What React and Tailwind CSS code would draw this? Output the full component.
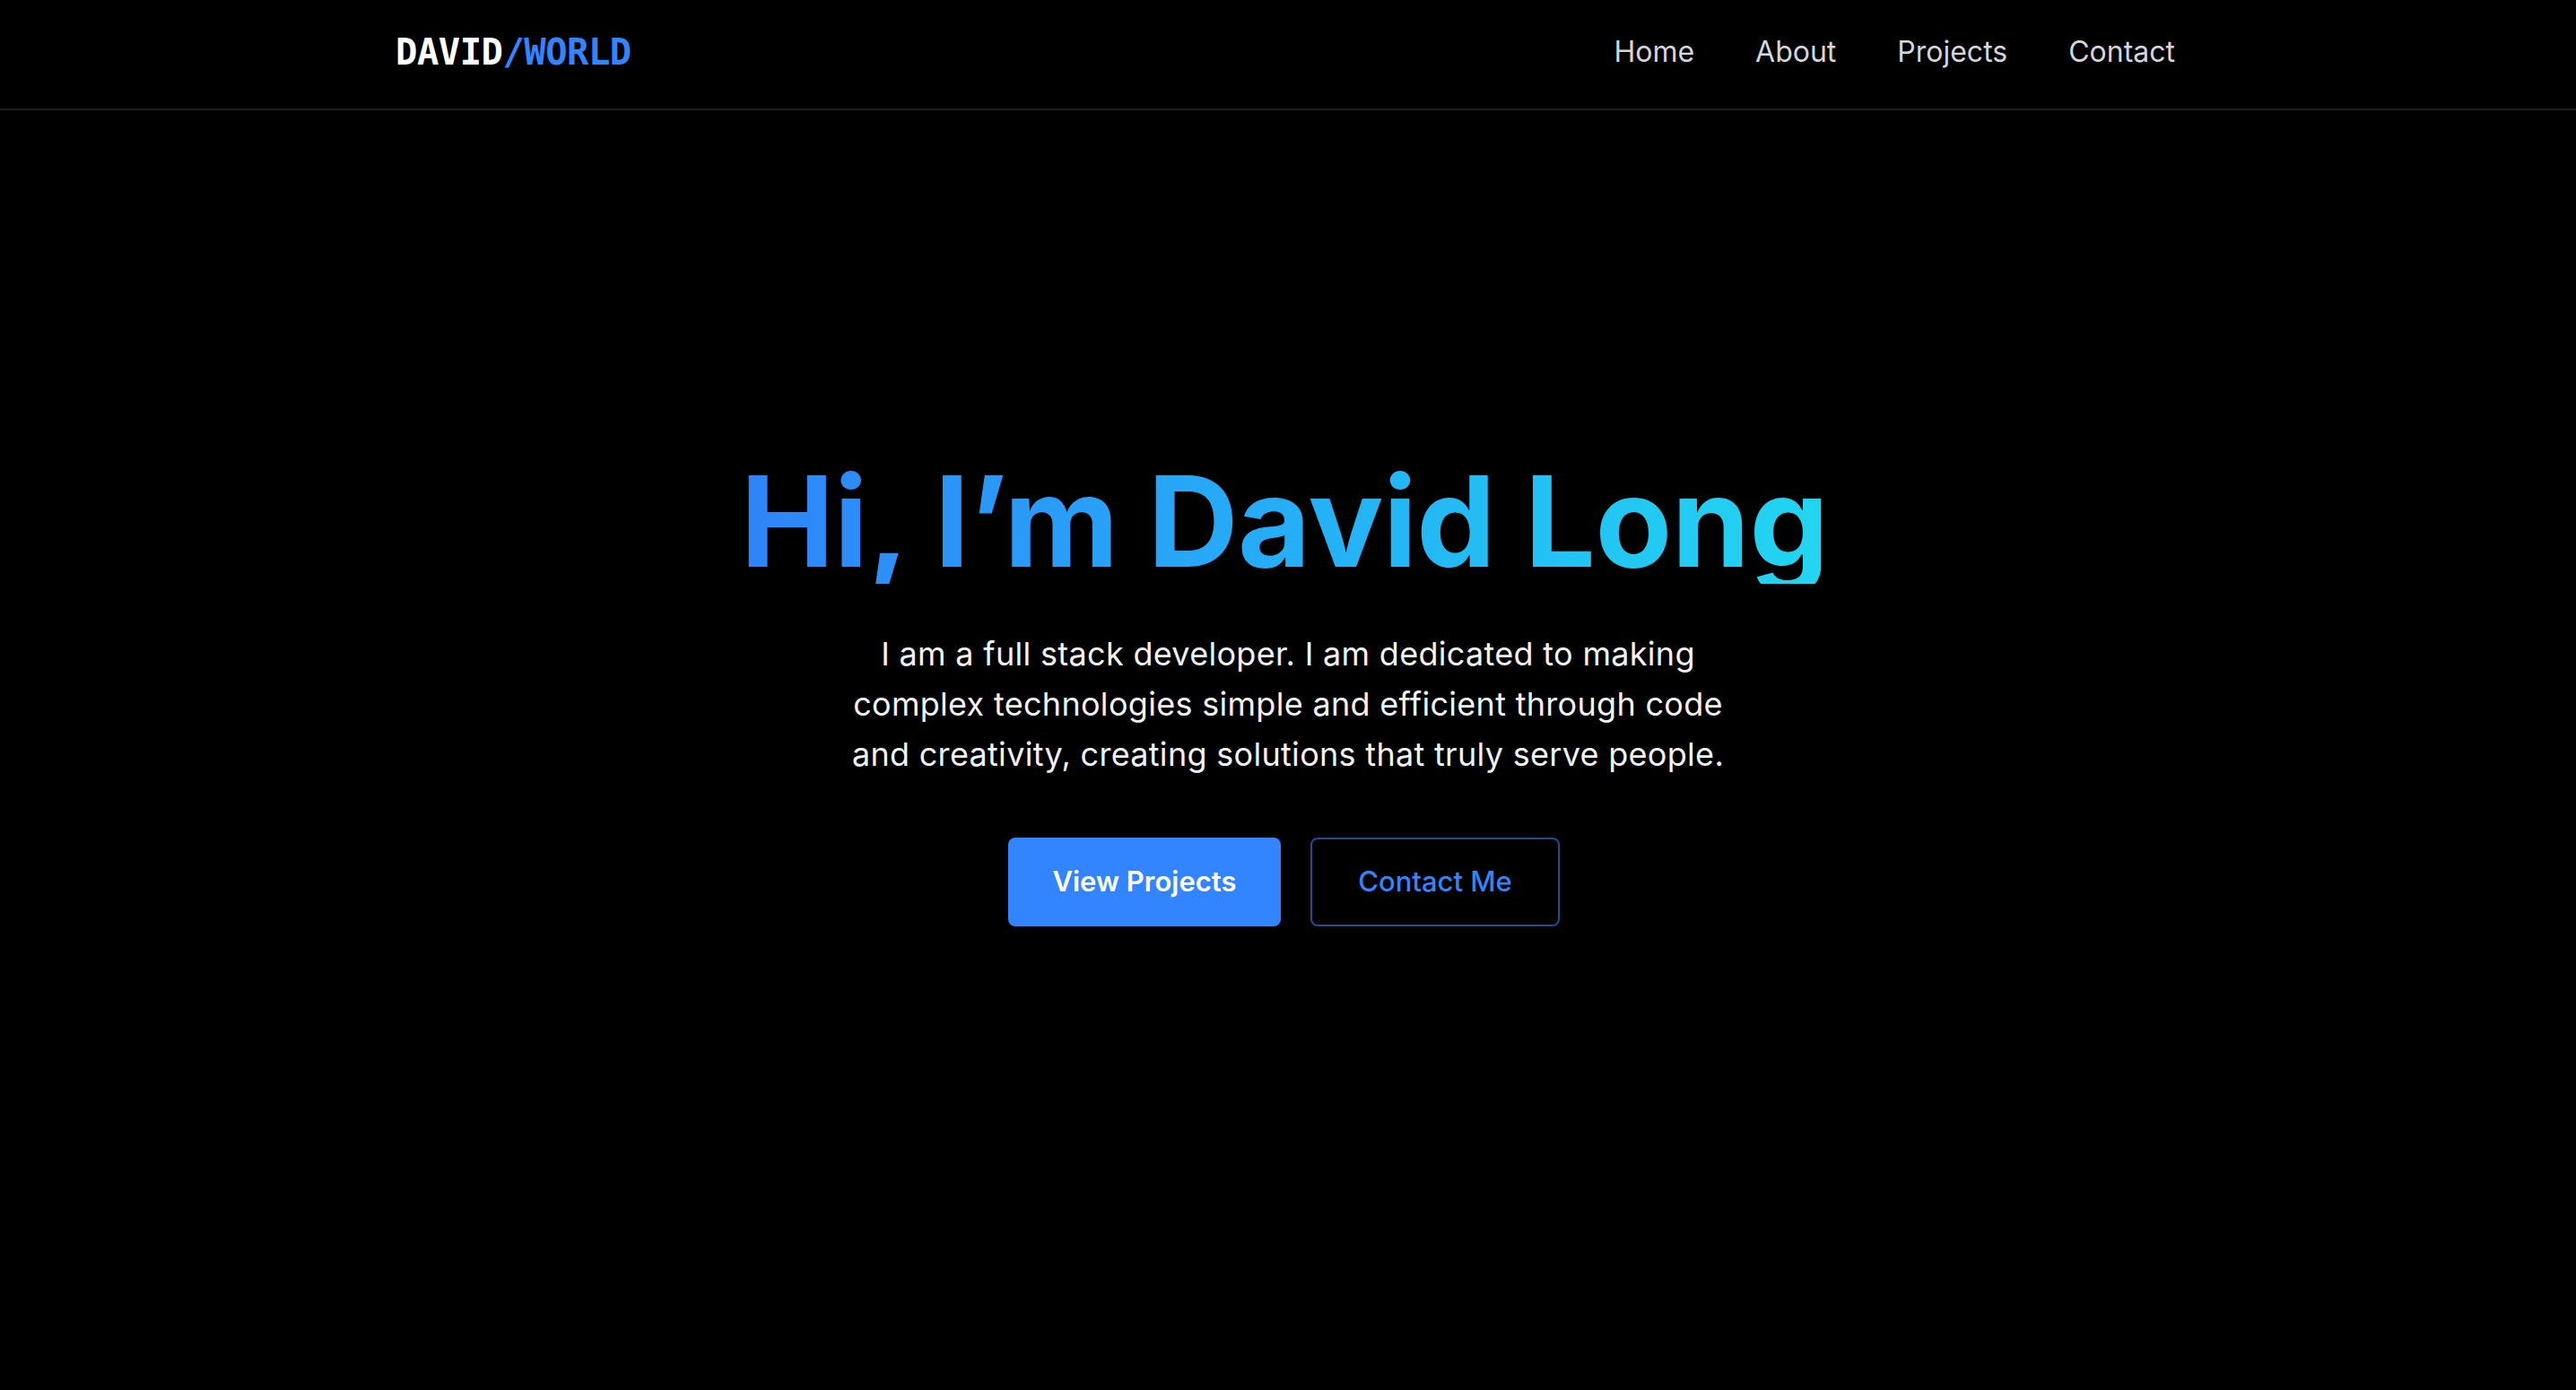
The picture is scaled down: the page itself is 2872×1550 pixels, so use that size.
import React from "react";

export default function App() {
  const sans = { fontFamily: 'Inter, "Noto Sans", sans-serif' };
  return (
    <div className="min-h-screen w-full bg-black text-white" style={sans}>
      <header className="h-[123px] border-b-2 border-[#1c1c1c]">
        <div className="mx-auto flex h-full w-[1990px] items-center justify-between pb-[5px]">
          <a
            className="text-[40.5px] font-bold tracking-[-0.5px] text-white"
            style={{ fontFamily: '"DejaVu Sans Mono", "Liberation Mono", monospace' }}
          >
            DAVID<span className="text-[#3384ff]">/WORLD</span>
          </a>
          <nav className="mr-[6px] flex items-center gap-[68px] text-[32px] text-[#d4d6dc]">
            <a>Home</a>
            <a>About</a>
            <a>Projects</a>
            <a>Contact</a>
          </nav>
        </div>
      </header>

      <main className="flex flex-col items-center pt-[388px]">
        <h1 className="mr-[8px] inline-block bg-gradient-to-r from-[#2f84f8] to-[#22d6f0] bg-clip-text text-[140px] font-bold leading-none tracking-[-0.5px] text-transparent">
          Hi, I’m David Long
        </h1>
        <p className="mt-[50px] w-[1000px] text-center text-[36px] leading-[56px] tracking-[0.3px] text-[#f2f2f2]">
          I am a full stack developer. I am dedicated to making complex technologies simple and efficient through code and creativity, creating solutions that truly serve people.
        </p>
        <div className="mr-[9px] mt-[65px] flex items-center gap-[33px]">
          <button className="flex h-[99px] w-[304px] items-center justify-center rounded-[8px] bg-[#3384ff] text-[31px] font-semibold text-white">
            View Projects
          </button>
          <button className="flex h-[99px] w-[278px] items-center justify-center rounded-[8px] border-2 border-[#1f4c8c] text-[31px] font-medium text-[#3384ff]">
            Contact Me
          </button>
        </div>
      </main>
    </div>
  );
}
